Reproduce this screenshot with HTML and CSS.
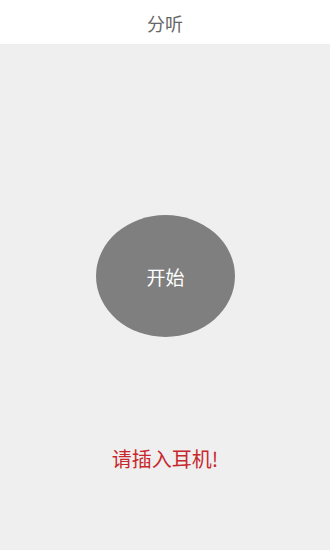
FILE: index.html
```html
<!DOCTYPE html>
<html lang="zh-CN">
<head>
    <meta charset="UTF-8">
    <meta name="viewport" content="width=device-width, initial-scale=1.0">
    <title>分听</title>
    <link rel="stylesheet" href="styles.css">
</head>
<body>
    <div class="header">分听</div>
    <div class="main">
        <button class="start" type="button">开始</button>
        <div class="tip">请插入耳机!</div>
    </div>
</body>
</html>
```

FILE: styles.css
```css
body {
    font-family: "Noto Sans CJK SC", "Liberation Sans", sans-serif;
    margin: 0;
    padding: 0;
    background-color: #efefef;
    height: 550px;
    display: flex;
    flex-direction: column;
}
.header {
    height: 44px;
    line-height: 46px;
    background-color: #fff;
    color: #666;
    font-size: 18px;
    text-align: center;
}
.main {
    flex: 1;
    display: flex;
    flex-direction: column;
    align-items: center;
    padding-top: 171px;
}
.start {
    width: 139px;
    height: 122px;
    border: none;
    border-radius: 50%;
    background-color: #7f7f7f;
    color: #fff;
    font-family: inherit;
    font-size: 19px;
    padding: 0;
    margin-left: 1px;
}
.tip {
    margin-top: 110px;
    color: #c8282d;
    font-size: 20px;
    line-height: 24px;
}
```
